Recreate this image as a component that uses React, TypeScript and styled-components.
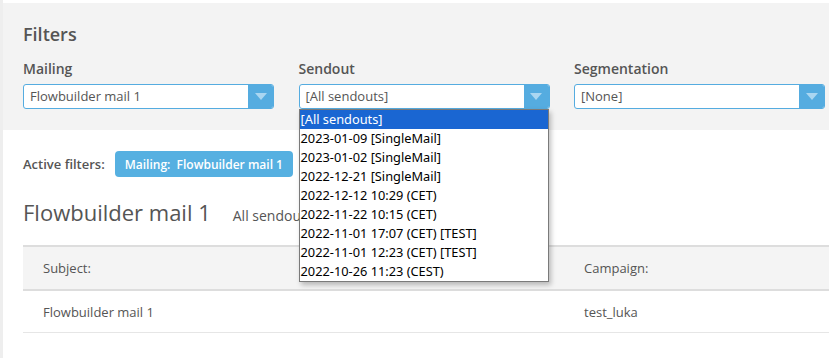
import React from 'react';
import styled, { createGlobalStyle } from 'styled-components';

const GlobalStyle = createGlobalStyle`
  html, body {
    margin: 0;
    padding: 0;
    background: #ffffff;
  }
  body {
    font-family: "Open Sans", "Noto Sans", sans-serif;
    color: #555555;
  }
`;

const Page = styled.div`
  width: 826px;
  height: 355px;
  padding-top: 3px;
  border-left: 3px solid #eeeeee;
  background: #ffffff;
  overflow: hidden;
`;

const FilterPanel = styled.section`
  background: #f3f3f3;
  padding: 19px 0 21px 20px;
`;

const PanelTitle = styled.h2`
  margin: 0 0 13px;
  font-size: 18px;
  line-height: 24px;
  font-weight: 600;
  color: #555555;
`;

const FilterGrid = styled.div`
  display: grid;
  grid-template-columns: repeat(3, 251px);
  column-gap: 24.5px;
`;

const Field = styled.div`
  position: relative;
  display: flex;
  flex-direction: column;
`;

const FieldLabel = styled.label`
  font-size: 14px;
  line-height: 20px;
  font-weight: 600;
  color: #555555;
  margin-bottom: 5px;
`;

const SelectBox = styled.div`
  display: flex;
  height: 25px;
  box-sizing: border-box;
  border: 1px solid #55ace0;
  border-radius: 3px;
  background: #ffffff;
  overflow: hidden;
`;

const SelectValue = styled.div`
  flex: 1;
  padding: 0 6px;
  font-size: 13px;
  line-height: 23px;
  color: #555555;
  white-space: nowrap;
`;

const SelectButton = styled.div`
  width: 25px;
  background: #55ace0;
  display: flex;
  align-items: center;
  justify-content: center;
`;

const Caret = styled.span`
  width: 0;
  height: 0;
  border-left: 6px solid transparent;
  border-right: 6px solid transparent;
  border-top: 7px solid #aad6f1;
`;

const OptionList = styled.ul`
  position: absolute;
  top: 50px;
  left: 0;
  width: 250px;
  box-sizing: border-box;
  margin: 0;
  padding: 0;
  list-style: none;
  background: #ffffff;
  border: 1px solid #7a7a7a;
  box-shadow: 2px 3px 5px rgba(0, 0, 0, 0.25);
  z-index: 10;
`;

const OptionItem = styled.li<{ $active?: boolean }>`
  height: 19px;
  padding: 0 1px;
  font-family: "Noto Sans", "Open Sans", sans-serif;
  font-size: 12.8px;
  line-height: 19px;
  white-space: nowrap;
  color: ${(p) => (p.$active ? '#ffffff' : '#000000')};
  background: ${(p) => (p.$active ? '#1a66d2' : 'transparent')};
`;

const Content = styled.div`
  padding-left: 20px;
`;

const ActiveRow = styled.div`
  display: flex;
  align-items: center;
  gap: 10px;
  margin-top: 21px;
  height: 26px;
`;

const ActiveLabel = styled.span`
  font-size: 13px;
  font-weight: 600;
  color: #555555;
`;

const Chip = styled.span`
  display: inline-flex;
  align-items: center;
  height: 26px;
  padding: 0 10px;
  border-radius: 4px;
  background: #56b0e1;
  color: #ffffff;
  font-size: 12px;
  font-weight: 600;
  white-space: pre;
`;

const Heading = styled.div`
  display: flex;
  align-items: baseline;
  gap: 22px;
  margin-top: 20px;
  height: 36px;
`;

const HeadingTitle = styled.h1`
  margin: 0;
  font-size: 22px;
  font-weight: 500;
  color: #555555;
`;

const HeadingSub = styled.span`
  font-size: 14px;
  color: #555555;
`;

const Table = styled.table`
  margin-top: 12px;
  width: 806px;
  border-collapse: collapse;
  font-size: 13px;
  color: #555555;
`;

const HeadCell = styled.th<{ $width?: string }>`
  width: ${(p) => p.$width || 'auto'};
  height: 42px;
  padding: 0 20px;
  text-align: left;
  font-weight: 400;
  background: #f4f4f4;
  border-top: 2px solid #dddddd;
  border-bottom: 2px solid #dddddd;
`;

const Cell = styled.td`
  height: 41px;
  padding: 0 20px;
  border-bottom: 1px solid #e6e6e6;
`;

const sendouts = [
  '[All sendouts]',
  '2023-01-09 [SingleMail]',
  '2023-01-02 [SingleMail]',
  '2022-12-21 [SingleMail]',
  '2022-12-12 10:29 (CET)',
  '2022-11-22 10:15 (CET)',
  '2022-11-01 17:07 (CET) [TEST]',
  '2022-11-01 12:23 (CET) [TEST]',
  '2022-10-26 11:23 (CEST)',
];

const Select = ({ label, value, children }: { label: string; value: string; children?: React.ReactNode }) => (
  <Field>
    <FieldLabel>{label}</FieldLabel>
    <SelectBox>
      <SelectValue>{value}</SelectValue>
      <SelectButton>
        <Caret />
      </SelectButton>
    </SelectBox>
    {children}
  </Field>
);

const App = () => {
  return (
    <Page>
      <GlobalStyle />
      <FilterPanel>
        <PanelTitle>Filters</PanelTitle>
        <FilterGrid>
          <Select label="Mailing" value="Flowbuilder mail 1" />
          <Select label="Sendout" value="[All sendouts]">
            <OptionList>
              {sendouts.map((s, i) => (
                <OptionItem key={s} $active={i === 0}>
                  {s}
                </OptionItem>
              ))}
            </OptionList>
          </Select>
          <Select label="Segmentation" value="[None]" />
        </FilterGrid>
      </FilterPanel>

      <Content>
        <ActiveRow>
          <ActiveLabel>Active filters:</ActiveLabel>
          <Chip>Mailing:  Flowbuilder mail 1</Chip>
        </ActiveRow>

        <Heading>
          <HeadingTitle>Flowbuilder mail 1</HeadingTitle>
          <HeadingSub>All sendouts</HeadingSub>
        </Heading>

        <Table>
          <thead>
            <tr>
              <HeadCell $width="501px">Subject:</HeadCell>
              <HeadCell>Campaign:</HeadCell>
            </tr>
          </thead>
          <tbody>
            <tr>
              <Cell>Flowbuilder mail 1</Cell>
              <Cell>test_luka</Cell>
            </tr>
          </tbody>
        </Table>
      </Content>
    </Page>
  );
};

export default App;
